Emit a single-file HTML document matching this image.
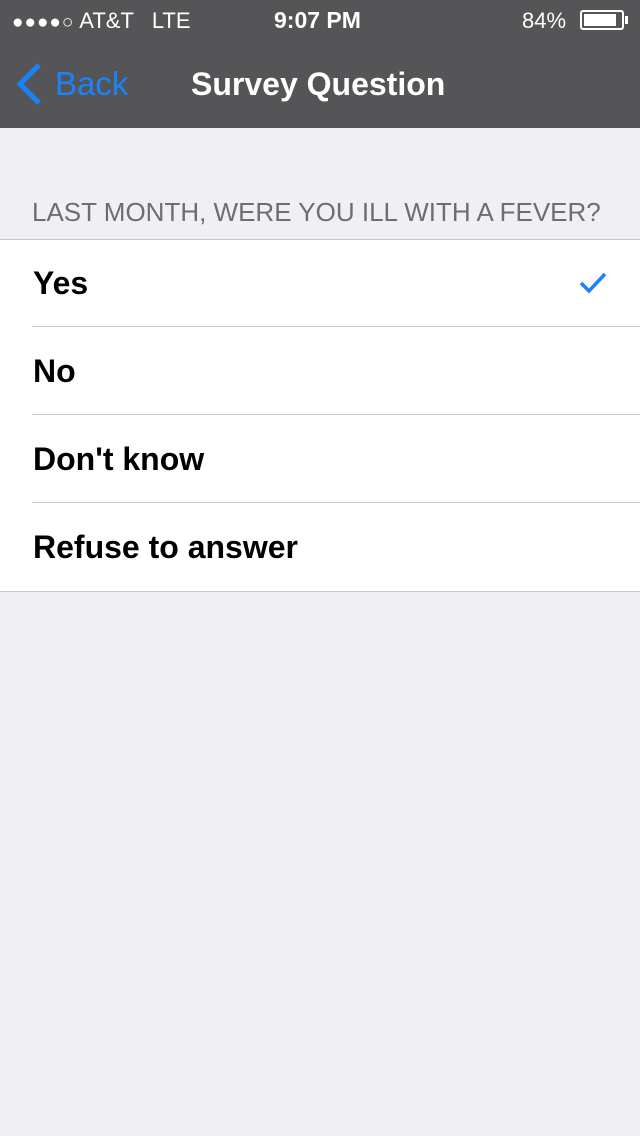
<!DOCTYPE html>
<html><head><style>
body{margin:0;width:640px;height:1136px;background:#efeff4;font-family:"Liberation Sans",sans-serif;position:relative;overflow:hidden}
.nav{position:absolute;top:0;left:0;width:640px;height:128px;background:#555557}
.t{position:absolute;white-space:nowrap}
.list{position:absolute;top:239px;left:0;width:640px;height:351px;background:#fff;border-top:1px solid #c8c7cc;border-bottom:1px solid #c8c7cc}
.row{position:absolute;left:33px;font-size:32px;font-weight:bold;color:#000}
.sep{position:absolute;left:32px;right:0;height:1px;background:#c8c7cc}
</style></head><body>
<div class="nav">
<div class="t" style="left:12px;top:8px;font-size:22px;color:#fff"><span style="font-size:19px;letter-spacing:1px">●●●●○</span> AT&amp;T &nbsp;&nbsp;LTE</div>
<div class="t" style="left:274px;top:7px;font-size:23px;font-weight:bold;color:#fff">9:07 PM</div>
<div class="t" style="left:522px;top:8px;font-size:22px;color:#fff">84%</div>
<div style="position:absolute;left:580px;top:10px;width:44px;height:20px;border:2px solid #fff;border-radius:3px;box-sizing:border-box"><div style="position:absolute;left:2px;top:2px;width:32px;height:12px;background:#fff"></div></div>
<div style="position:absolute;left:625px;top:16px;width:3px;height:8px;background:#fff"></div>
<svg style="position:absolute;left:14px;top:62px" width="30" height="44"><path d="M25 3 L6 22 L25 41" stroke="#1a82fb" stroke-width="5" fill="none"/></svg>
<div class="t" style="left:55px;top:65px;font-size:33px;color:#1a82fb">Back</div>
<div class="t" style="left:191px;top:66px;font-size:32px;font-weight:bold;color:#fff">Survey Question</div>
</div>
<div class="t" style="left:32px;top:197px;font-size:26px;color:#6d6d72">LAST MONTH, WERE YOU ILL WITH A FEVER?</div>
<div class="list">
<div class="row" style="top:25px">Yes</div>
<svg style="position:absolute;left:579px;top:32px" width="28" height="22"><path d="M2 11 L10 19 L26 2" stroke="#1a82fb" stroke-width="3.5" fill="none"/></svg>
<div class="sep" style="top:86px"></div>
<div class="row" style="top:113px">No</div>
<div class="sep" style="top:174px"></div>
<div class="row" style="top:201px">Don't know</div>
<div class="sep" style="top:262px"></div>
<div class="row" style="top:289px">Refuse to answer</div>
</div>
</body></html>
